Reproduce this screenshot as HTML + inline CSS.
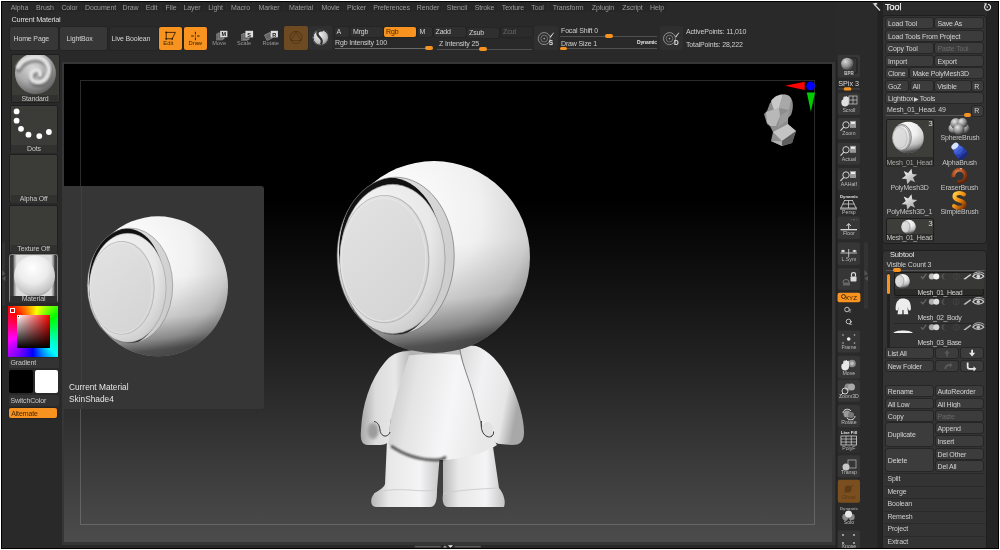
<!DOCTYPE html>
<html><head><meta charset="utf-8">
<style>
*{margin:0;padding:0;box-sizing:border-box}
html,body{width:1000px;height:550px;overflow:hidden;background:#fff}
body{font-family:"Liberation Sans",sans-serif;position:relative}
#frame{position:absolute;left:1px;top:1px;width:998px;height:548px;background:#000}
#ui{position:absolute;will-change:transform;left:2px;top:2px;width:996px;height:546px;background:#292929;overflow:hidden}
.a{position:absolute}
.t{position:absolute;white-space:nowrap;color:#cfcfcf;font-size:7px;line-height:8px;letter-spacing:-0.15px}
.mi{position:absolute;top:0;height:10.3px;background:#262626;border-radius:2px;color:#9c9c9c;font-size:7px;line-height:11px;text-align:center;letter-spacing:-0.1px}
.b{position:absolute;box-shadow:0 0 0 0.8px #232323;background:#3c3c3c;border-radius:2px;color:#d4d4d4;font-size:7px;line-height:10px;height:10px;white-space:nowrap;padding-left:2px;letter-spacing:-0.15px;overflow:hidden}
.o{background:#f7931e;color:#4a2a05}
.dim{color:#6a6a6a}
#canvas{position:absolute;left:59.5px;top:59.8px;width:775px;height:483.6px;background:#363636}
#cin{position:absolute;left:2.5px;top:2.2px;width:768px;height:478.4px;background:linear-gradient(#000 0px,#000 135px,#151515 238px,#282828 322px,#3b3b3b 402px,#4c4c4c 478px)}
#inner{position:absolute;left:16.4px;top:16.4px;width:735px;height:444.5px;border:1.3px solid rgba(255,255,255,0.17)}
</style></head><body>
<div id="frame"></div>
<div id="ui">
<!-- menu (ui offset: -2,-2) -->
<div class="mi" style="left:6px;width:23px">Alpha</div>
<div class="mi" style="left:31px;width:24px">Brush</div>
<div class="mi" style="left:56px;width:23px">Color</div>
<div class="mi" style="left:80px;width:37px">Document</div>
<div class="mi" style="left:118px;width:21px">Draw</div>
<div class="mi" style="left:141px;width:17px">Edit</div>
<div class="mi" style="left:160px;width:18px">File</div>
<div class="mi" style="left:179px;width:22px">Layer</div>
<div class="mi" style="left:203px;width:21px">Light</div>
<div class="mi" style="left:226px;width:25px">Macro</div>
<div class="mi" style="left:253px;width:28px">Marker</div>
<div class="mi" style="left:283px;width:32px">Material</div>
<div class="mi" style="left:316px;width:25px">Movie</div>
<div class="mi" style="left:342px;width:25px">Picker</div>
<div class="mi" style="left:368px;width:43px">Preferences</div>
<div class="mi" style="left:412px;width:28px">Render</div>
<div class="mi" style="left:441px;width:28px">Stencil</div>
<div class="mi" style="left:469px;width:27px">Stroke</div>
<div class="mi" style="left:497px;width:28px">Texture</div>
<div class="mi" style="left:526px;width:19px">Tool</div>
<div class="mi" style="left:547px;width:38px">Transform</div>
<div class="mi" style="left:586px;width:30px">Zplugin</div>
<div class="mi" style="left:616px;width:29px">Zscript</div>
<div class="mi" style="left:645px;width:20px">Help</div>

<div class="t" style="left:9.5px;top:13.5px;color:#dedede;font-size:7.4px;letter-spacing:-0.25px">Current Material</div>

<!-- toolbar -->
<div class="b" style="left:7.5px;top:24.5px;width:48px;height:23px;line-height:23px;padding-left:4px;background:#373737">Home Page</div>
<div class="b" style="left:57.5px;top:24.5px;width:47px;height:23px;line-height:23px;padding-left:7px;background:#373737">LightBox</div>
<div class="b" style="left:107.5px;top:24.5px;width:48px;height:23px;line-height:23px;background:#2c2c2c">Live Boolean</div>
<div class="b o" style="left:157px;top:24.5px;width:23px;height:23.5px"></div>
<div class="b o" style="left:182px;top:24.5px;width:23px;height:23.5px"></div>
<div class="a" style="left:282px;top:24px;width:24px;height:24px;background:#6e4a22;border-radius:2px"></div>
<div class="a" style="left:307px;top:24px;width:23px;height:24px;background:#2f2f2f;border-radius:2px"></div>
<div class="b" style="left:332.5px;top:24.5px;width:14.5px;background:#2f2f2f">A</div>
<div class="b" style="left:348px;top:24.5px;width:33px;background:#2f2f2f;padding-left:3px">Mrgb</div>
<div class="b o" style="left:382px;top:24.5px;width:32px">Rgb</div>
<div class="b" style="left:415.5px;top:24.5px;width:14.5px;background:#2f2f2f">M</div>
<div class="b" style="left:431.5px;top:24.5px;width:32.5px;background:#2f2f2f">Zadd</div>
<div class="b" style="left:465px;top:25.5px;width:32px;background:#2f2f2f">Zsub</div>
<div class="b dim" style="left:499px;top:24.5px;width:32px;background:#2b2b2b">Zcut</div>
<div class="t" style="left:333px;top:37px">Rgb Intensity 100</div>
<div class="a" style="left:333px;top:45.5px;width:98px;height:1px;background:#6a6a6a"></div>
<div class="a" style="left:423px;top:44px;width:7.5px;height:3.5px;background:#f7931e;border-radius:2px"></div>
<div class="t" style="left:437px;top:38px">Z Intensity 25</div>
<div class="a" style="left:435px;top:46.5px;width:95px;height:1px;background:#505050"></div>
<div class="a" style="left:477px;top:45px;width:7.5px;height:3.5px;background:#f7931e;border-radius:2px"></div>
<div class="a" style="left:532px;top:24px;width:23.5px;height:23.5px;background:#2f2f2f;border-radius:2px"></div>
<div class="t" style="left:559px;top:25px">Focal Shift 0</div>
<div class="a" style="left:558px;top:33.5px;width:97px;height:1px;background:#505050"></div>
<div class="a" style="left:603px;top:32px;width:7.5px;height:3.5px;background:#f7931e;border-radius:2px"></div>
<div class="t" style="left:559px;top:37.5px">Draw Size 1</div>
<div class="t" style="left:635px;top:36px;font-size:5px;font-weight:bold;color:#e0e0e0">Dynamic</div>
<div class="a" style="left:558px;top:46px;width:97px;height:1px;background:#505050"></div>
<div class="a" style="left:557.5px;top:44.5px;width:7.5px;height:3.5px;background:#f7931e;border-radius:2px"></div>
<div class="a" style="left:657.5px;top:24px;width:23.5px;height:23.5px;background:#2f2f2f;border-radius:2px"></div>
<div class="t" style="left:684px;top:26px">ActivePoints: 11,010</div>
<div class="t" style="left:684px;top:38.5px">TotalPoints: 28,222</div>


<svg class="a" style="left:-2px;top:-2px" width="1000" height="60" viewBox="0 0 1000 60" font-family="Liberation Sans, sans-serif">
<defs>
<radialGradient id="gMatS" cx="0.4" cy="0.35" r="0.7"><stop offset="0" stop-color="#f4f4f4"/><stop offset="0.7" stop-color="#b8b8b8"/><stop offset="1" stop-color="#606060"/></radialGradient>
<g id="brushIco">
<circle cx="0" cy="0" r="6" fill="none" stroke="#9a9a9a" stroke-width="0.9"/>
<circle cx="0" cy="0" r="3.4" fill="none" stroke="#7a7a7a" stroke-width="0.9"/>
<circle cx="0" cy="0" r="0.8" fill="#aaa"/>
<path d="M5,-1.5 L9,-6 L10.2,-6.5 L9.6,-5 L6.5,-0.5 Z" fill="#e8e8e8" stroke="#111" stroke-width="0.5"/>
</g>
</defs>
<!-- Edit -->
<path d="M166.2,32.4 L175.4,32.4 L172.2,38.8 L166.2,38.8 Z" fill="none" stroke="#1e1405" stroke-width="0.8"/>
<g fill="#1e1405"><circle cx="166.2" cy="32.4" r="0.9"/><circle cx="172.2" cy="38.8" r="0.9"/><circle cx="166.2" cy="38.8" r="0.9"/></g>
<text x="168.3" y="45.3" font-size="5.8" fill="#3a2405" text-anchor="middle">Edit</text>
<!-- Draw -->
<path d="M191.2,36 L193.8,36 M197,36 L199.6,36 M195.4,31.8 L195.4,34.4 M195.4,37.6 L195.4,40.2" stroke="#1e1405" stroke-width="0.9"/>
<circle cx="195.4" cy="36" r="0.6" fill="#1e1405"/>
<text x="195.3" y="45.3" font-size="5.8" fill="#3a2405" text-anchor="middle">Draw</text>
<!-- Move -->
<rect x="216.5" y="34" width="6" height="6" fill="#555" stroke="#888" stroke-width="0.6"/>
<rect x="218" y="33" width="6" height="6" fill="#666" stroke="#999" stroke-width="0.6"/>
<rect x="220.2" y="30.8" width="7.2" height="6.4" fill="#ddd"/>
<text x="223.8" y="36.4" font-size="5.5" fill="#111" text-anchor="middle" font-weight="bold">M</text>
<text x="219.2" y="45" font-size="5.6" fill="#9a9a9a" text-anchor="middle">Move</text>
<!-- Scale -->
<rect x="241.5" y="34.5" width="6" height="6" fill="#555" stroke="#888" stroke-width="0.6"/>
<rect x="243" y="33.5" width="6" height="6" fill="#666" stroke="#999" stroke-width="0.6"/>
<rect x="245.4" y="30.8" width="7.7" height="6.6" fill="#ddd"/>
<text x="249.2" y="36.5" font-size="5.5" fill="#111" text-anchor="middle" font-weight="bold">S</text>
<text x="244" y="45" font-size="5.6" fill="#9a9a9a" text-anchor="middle">Scale</text>
<!-- Rotate -->
<rect x="265.5" y="33.5" width="6" height="6" fill="#666" stroke="#999" stroke-width="0.6" transform="rotate(-25 268.5 36.5)"/>
<rect x="270.7" y="30.8" width="7.2" height="6.6" fill="#ddd"/>
<text x="274.3" y="36.5" font-size="5.5" fill="#111" text-anchor="middle" font-weight="bold">R</text>
<text x="270.7" y="45" font-size="5.6" fill="#9a9a9a" text-anchor="middle">Rotate</text>
<!-- brown circle -->
<circle cx="296" cy="37.4" r="6" fill="none" stroke="#4a3010" stroke-width="0.8"/>
<path d="M296,31.8 L301,40.5 L291,40.5 Z" fill="none" stroke="#4a3010" stroke-width="0.7"/>
<!-- material S -->
<circle cx="320.8" cy="37.6" r="8.2" fill="url(#gMatS)"/>
<circle cx="320.8" cy="37.6" r="7.8" fill="none" stroke="#2a2a2a" stroke-width="1"/>
<path d="M323,30.5 C318,30 316,33 318.5,36 C321,39 323,40 321,44.5" stroke="#333" stroke-width="2.2" fill="none"/>
<use href="#brushIco" transform="translate(544.2,38.6)"/>
<text x="551" y="45.3" font-size="6.5" fill="#e0e0e0" text-anchor="middle" font-weight="bold">S</text>
<use href="#brushIco" transform="translate(669.5,38.6)"/>
<text x="676.3" y="45.3" font-size="6.5" fill="#e0e0e0" text-anchor="middle" font-weight="bold">D</text>
</svg>
<!-- left tray (ui coords = page-2) -->
<div class="a" style="left:9px;top:52.3px;width:49px;height:48.5px;background:#3b3b38;border-radius:2px;border:1px solid #1f1f1f;overflow:hidden">
<svg width="48" height="48" viewBox="0 0 48 48" style="position:absolute;left:-1px;top:-1px">
<defs><radialGradient id="gStd" cx="0.4" cy="0.3" r="0.75"><stop offset="0" stop-color="#d8d8d8"/><stop offset="0.55" stop-color="#ababab"/><stop offset="1" stop-color="#5a5a5a"/></radialGradient><filter id="fStd"><feGaussianBlur stdDeviation="0.9"/></filter></defs>
<circle cx="24.5" cy="19.5" r="20.5" fill="url(#gStd)"/>
<path d="M7,14 C12,4 28,1 35,9 C42,18 35,30 26,29 C18,28 18,19 24,17 C28,16 30,19 29,22" stroke="#5a5a5a" stroke-width="6" fill="none" stroke-linecap="round" opacity="0.55" filter="url(#fStd)" transform="translate(1,1.5)"/>
<path d="M7,13 C12,3 28,0 35,8 C42,17 35,29 26,28 C18,27 18,18 24,16 C28,15 30,18 29,21" stroke="#e4e4e4" stroke-width="4.5" fill="none" stroke-linecap="round" filter="url(#fStd)"/>
</svg></div>
<div class="a" style="left:10px;top:92.6px;width:46px;height:7.5px;background:#313130"></div>
<div class="t" style="left:9px;top:92.6px;width:48px;text-align:center;color:#c8c8c8">Standard</div>
<div class="a" style="left:7.6px;top:102.7px;width:48.6px;height:48.5px;background:#3b3b38;border-radius:2px;border:1px solid #1f1f1f"></div>
<svg class="a" style="left:-2px;top:-2px" width="70" height="160" viewBox="0 0 70 160">
<g fill="#fff"><circle cx="16.6" cy="111.4" r="2.9"/><circle cx="16.6" cy="120.7" r="2.9"/><circle cx="21" cy="128.8" r="2.9"/><circle cx="28.5" cy="134.7" r="2.9"/><circle cx="39.3" cy="136.1" r="2.9"/><circle cx="48.9" cy="132" r="2.9"/></g></svg>
<div class="a" style="left:9px;top:143px;width:46px;height:7.5px;background:#313130"></div>
<div class="t" style="left:8px;top:143px;width:48px;text-align:center;color:#c8c8c8">Dots</div>
<div class="a" style="left:7.2px;top:152.4px;width:48.6px;height:48.5px;background:#3b3b38;border-radius:2px;border:1px solid #1f1f1f"></div>
<div class="a" style="left:8.6px;top:193px;width:46px;height:7.5px;background:#313130"></div>
<div class="t" style="left:7.6px;top:193px;width:48px;text-align:center;color:#c8c8c8">Alpha Off</div>
<div class="a" style="left:7.2px;top:202.6px;width:48.6px;height:48.5px;background:#3b3b38;border-radius:2px;border:1px solid #1f1f1f"></div>
<div class="a" style="left:8.6px;top:243px;width:46px;height:7.5px;background:#313130"></div>
<div class="t" style="left:7.6px;top:243px;width:48px;text-align:center;color:#c8c8c8">Texture Off</div>
<div class="a" style="left:7px;top:252.4px;width:49.2px;height:48.7px;background:#3a3a3a;border-radius:2.5px;border:1px solid #8a8a8a;overflow:hidden">
<svg width="48" height="47" viewBox="0 0 48 47" style="position:absolute;left:0;top:0">
<defs><linearGradient id="gMatBg" x1="0" y1="0" x2="1" y2="0"><stop offset="0" stop-color="#7a7a7a"/><stop offset="0.08" stop-color="#dcdcdc"/><stop offset="0.92" stop-color="#dcdcdc"/><stop offset="1" stop-color="#6a6a6a"/></linearGradient>
<radialGradient id="gMat" cx="0.45" cy="0.3" r="0.75"><stop offset="0" stop-color="#ffffff"/><stop offset="0.5" stop-color="#ececec"/><stop offset="0.85" stop-color="#c4c4c4"/><stop offset="1" stop-color="#8a8a8a"/></radialGradient></defs>
<rect x="3.5" y="0" width="41" height="41" fill="url(#gMatBg)"/>
<circle cx="24.5" cy="21" r="20.5" fill="url(#gMat)"/>
</svg></div>
<div class="a" style="left:8px;top:294px;width:47px;height:6.5px;background:#2f2f2f"></div>
<div class="t" style="left:7px;top:293px;width:49px;text-align:center;color:#c8c8c8">Material</div>
<!-- color picker -->
<div class="a" style="left:6.3px;top:304px;width:50px;height:50.7px;background:conic-gradient(from -45deg at 50% 50%,#f00 0deg,#ff0 55deg,#0f0 100deg,#0ff 180deg,#00f 225deg,#f0f 295deg,#f00 360deg)"></div>
<div class="a" style="left:15px;top:312.8px;width:33.2px;height:33.2px;background:linear-gradient(to top,#000,rgba(0,0,0,0)),linear-gradient(to right,#fff,#f00)"></div>
<div class="a" style="left:7.6px;top:306.3px;width:5.7px;height:5.2px;border:1px solid #fff;background:#e00"></div>
<div class="a" style="left:15px;top:312.8px;width:3px;height:3px;border:1px solid #fff;background:#222"></div>
<div class="a" style="left:6.5px;top:355.8px;width:50px;height:9.8px;background:#333"></div>
<div class="t" style="left:8.5px;top:357px;color:#c8c8c8">Gradient</div>
<div class="a" style="left:6.7px;top:367.8px;width:24px;height:23px;background:#000;border-radius:2px"></div>
<div class="a" style="left:32.5px;top:367.8px;width:23.3px;height:23px;background:#fff;border-radius:2px"></div>
<div class="a" style="left:6.5px;top:392.9px;width:50px;height:10.9px;background:#333;border-radius:2px"></div>
<div class="t" style="left:8.5px;top:394.5px;color:#c8c8c8">SwitchColor</div>
<div class="b o" style="left:7.2px;top:406.3px;width:48px;height:10px;line-height:11px;color:#4a2805">Alternate</div>
<div class="a" style="left:0px;top:239.5px;width:3px;height:64px;background:#333;border-radius:1px"></div><svg class="a" style="left:-2px;top:-2px" width="10" height="300"><path d="M2,270 L5.5,274 L2,275.5 Z" fill="#555"/><path d="M5.5,276 L2,278.5 L5.5,281 Z" fill="#555"/></svg>



<div id="canvas"><div id="cin"><div id="inner"></div></div></div>
<svg class="a" style="left:-2px;top:-2px" width="1000" height="550" viewBox="0 0 1000 550">
<rect x="414.5" y="545.8" width="26.5" height="1.6" rx="0.8" fill="#5a5a5a"/>
<rect x="454.5" y="545.8" width="26.5" height="1.6" rx="0.8" fill="#5a5a5a"/>
<path d="M443,547.6 L445,545.4 L447,547.6 Z" fill="#aaa"/>
<path d="M448,545.3 L453,545.3 L450.5,547.8 Z" fill="#eee"/>
</svg>
<!-- character -->
<svg class="a" style="left:-2px;top:-2px" width="1000" height="550" viewBox="0 0 1000 550">
<defs>
<radialGradient id="gHead" cx="0.32" cy="0.26" r="0.85"><stop offset="0" stop-color="#ffffff"/><stop offset="0.5" stop-color="#f0f0f0"/><stop offset="0.8" stop-color="#d2d2d2"/><stop offset="1" stop-color="#9a9a9a"/></radialGradient>
<linearGradient id="gHeadShade" x1="0" y1="0" x2="0.12" y2="1"><stop offset="0.5" stop-color="#000" stop-opacity="0"/><stop offset="0.78" stop-color="#000" stop-opacity="0.12"/><stop offset="0.92" stop-color="#000" stop-opacity="0.35"/><stop offset="1" stop-color="#000" stop-opacity="0.6"/></linearGradient>
<radialGradient id="gRing" cx="0.35" cy="0.3" r="0.85"><stop offset="0" stop-color="#f6f6f6"/><stop offset="0.6" stop-color="#e8e8e8"/><stop offset="0.85" stop-color="#cfcfcf"/><stop offset="1" stop-color="#a0a0a0"/></radialGradient><linearGradient id="gWall" x1="0" y1="0" x2="1" y2="1"><stop offset="0" stop-color="#e4e4e4"/><stop offset="1" stop-color="#c8c8c8"/></linearGradient>
<linearGradient id="gDisc" x1="0.2" y1="0" x2="0.8" y2="1"><stop offset="0" stop-color="#e2e2e2"/><stop offset="1" stop-color="#d4d4d4"/></linearGradient>
<linearGradient id="gBody" x1="0" y1="0" x2="1" y2="0">
<stop offset="0" stop-color="#c8c8c8"/><stop offset="0.2" stop-color="#f2f2f2"/><stop offset="0.7" stop-color="#f6f6f8"/><stop offset="1" stop-color="#bdbdbd"/></linearGradient>
<linearGradient id="gArm" x1="0" y1="0" x2="1" y2="0">
<stop offset="0" stop-color="#bdbdbd"/><stop offset="0.35" stop-color="#f4f4f4"/><stop offset="0.75" stop-color="#f0f0f2"/><stop offset="1" stop-color="#b0b0b0"/></linearGradient>

<linearGradient id="gLeg" x1="0" y1="0" x2="1" y2="0"><stop offset="0" stop-color="#b8b8b8"/><stop offset="0.25" stop-color="#e8e8e8"/><stop offset="0.7" stop-color="#f4f4f6"/><stop offset="1" stop-color="#c4c4c4"/></linearGradient>
<linearGradient id="gTorso" x1="0" y1="0" x2="1" y2="0.2"><stop offset="0" stop-color="#c0c0c0"/><stop offset="0.3" stop-color="#e4e4e4"/><stop offset="0.65" stop-color="#f6f6f8"/><stop offset="1" stop-color="#e8e8e8"/></linearGradient>
<linearGradient id="gArmL" x1="0" y1="0" x2="1" y2="0"><stop offset="0" stop-color="#a8a8a8"/><stop offset="0.3" stop-color="#dcdcdc"/><stop offset="0.7" stop-color="#e8e8e8"/><stop offset="1" stop-color="#b8b8b8"/></linearGradient>
<linearGradient id="gArmR" x1="0" y1="0" x2="1" y2="0.3"><stop offset="0" stop-color="#d8d8d8"/><stop offset="0.4" stop-color="#f2f2f4"/><stop offset="0.8" stop-color="#e6e6e6"/><stop offset="1" stop-color="#a8a8a8"/></linearGradient>
<filter id="fBlur" x="-50%" y="-50%" width="200%" height="200%"><feGaussianBlur stdDeviation="1"/></filter><filter id="fBlur2" x="-50%" y="-50%" width="200%" height="200%"><feGaussianBlur stdDeviation="1.8"/></filter>
<clipPath id="cpOpen"><ellipse cx="-38" cy="-1" rx="58" ry="78"/></clipPath>
<g id="headS">
<circle cx="0" cy="0" r="95" fill="url(#gHead)"/><circle cx="0" cy="0" r="95" fill="url(#gHeadShade)"/>
<ellipse cx="-38" cy="-1" rx="58" ry="78" fill="url(#gWall)" stroke="#555" stroke-width="4"/>
<ellipse cx="-41" cy="2" rx="52" ry="74" fill="url(#gRing)" stroke="#777" stroke-width="3"/>
<ellipse cx="-49.3" cy="2" rx="43.6" ry="62.6" fill="url(#gDisc)" stroke="#aaa" stroke-width="3"/>
</g>
<g id="headG">
<circle cx="0" cy="0" r="95" fill="url(#gHead)"/><circle cx="0" cy="0" r="95" fill="url(#gHeadShade)"/>
<ellipse cx="-38" cy="-1" rx="58" ry="78" fill="url(#gWall)"/>
<g clip-path="url(#cpOpen)">
<ellipse cx="-43" cy="-4.5" rx="51" ry="74" fill="#111"/>
<ellipse cx="-42" cy="5" rx="49" ry="74" fill="#222"/>
</g>
<ellipse cx="-38" cy="-1" rx="58" ry="78" fill="none" stroke="#666" stroke-width="0.6"/>
<ellipse cx="-41" cy="2" rx="52" ry="74" fill="url(#gRing)" stroke="#8a8a8a" stroke-width="0.6"/>
<ellipse cx="-49" cy="2" rx="44.5" ry="63.5" fill="#b4b4b4"/>
<ellipse cx="-49.3" cy="2" rx="43.6" ry="62.6" fill="url(#gDisc)"/>
<ellipse cx="-50" cy="2.5" rx="42" ry="61" fill="none" stroke="#efefef" stroke-width="0.8" opacity="0.7"/>
</g>
</defs>
<!-- legs -->
<path d="M387,440 L441,440 L437,490 C437,500 436,507 430,507 L376,507 C370,507 370,498 374,494 C380,489 384,488 385,484 Z" fill="url(#gLeg)"/>
<path d="M443,440 L492,440 L499,488 C504,494 506,502 504,507 L448,507 C443,507 442,500 443,494 Z" fill="url(#gLeg)"/>
<path d="M374,494 C380,490 395,489 410,490 C420,491 430,491 437,490" stroke="#cfcfcf" stroke-width="1" fill="none"/>
<path d="M443,494 C455,490 480,489 499,488" stroke="#cfcfcf" stroke-width="1" fill="none"/>
<!-- torso -->
<path d="M400,352 C420,349 450,348 462,350 L472,385 L482,420 L497,445 C485,453 462,460 440,460 C418,460 398,452 388,444 L392,405 L398,370 Z" fill="url(#gTorso)"/>
<path d="M391,446 C404,455 420,460 436,460 C440,460 443,459 446,457" stroke="#1a1a1a" stroke-width="2.6" fill="none" opacity="0.8" filter="url(#fBlur)"/>
<path d="M402,351 C425,348 450,347 462,350 L462,355 C440,353 420,354 402,356 Z" fill="#9a9a9a" opacity="0.6"/>
<!-- arms -->
<path d="M400.5,352 L410,352 C404,372 396,395 391,418 C389,428 390,435 389,440 C388,444 384,445 378,445 L368,445 C362,445 360,440 361,430 C362,405 370,380 385,362 C390,356 395,353 400.5,352 Z" fill="url(#gArmL)"/>
<ellipse cx="373" cy="431" rx="5.5" ry="8" fill="#9c9c9c" filter="url(#fBlur2)"/><path d="M374,421.5 C378,422 379.5,426 380,430 C380.5,434 383,436.5 386,436 C388,435.5 389.5,434 390,432" stroke="#222" stroke-width="0.9" fill="none"/>
<path d="M460,350 C462,345 470,345 476,346 C488,350 500,362 508,378 C518,398 524,418 524,432 C524,442 520,445 512,445 L500,444 C494,443 491,440 492,436 C488,431 485,428 482,427 C478,410 472,388 466,372 C462,362 459,355 460,350 Z" fill="url(#gArmR)"/>
<path d="M460,350 C462,362 466,372 472,390 C477,408 480,420 482,427" stroke="#555" stroke-width="0.7" fill="none"/>
<ellipse cx="487.5" cy="429" rx="5.5" ry="7" fill="#e2e2e2"/><path d="M481.5,421 C480.5,428 482,434 487,436.5 C491,438 494,435.5 493.5,431.5" stroke="#222" stroke-width="0.9" fill="none"/>
<use href="#headG" transform="translate(434,257) scale(1.01)"/>
</svg>
<div class="a" style="left:61px;top:184px;width:200.5px;height:223px;background:#363636;border-radius:0 3px 3px 0"></div>
<div class="a" style="left:78.5px;top:184px;width:1px;height:223px;background:#3f3f3f"></div>
<svg class="a" style="left:-2px;top:-2px" width="1000" height="550" viewBox="0 0 1000 550"><use href="#headG" transform="translate(158,286.3) scale(0.737)"/></svg>
<div class="t" style="left:67px;top:380px;color:#e6e6e6;font-size:8.3px;line-height:10px;letter-spacing:0">Current Material</div>
<div class="t" style="left:67px;top:391.6px;color:#e6e6e6;font-size:8.3px;line-height:10px;letter-spacing:0">SkinShade4</div>
<svg class="a" style="left:-2px;top:-2px" width="1000" height="160" viewBox="0 0 1000 160">
<path d="M785,85.8 L804.7,81.8 L804.7,90 Z" fill="#f00"/>
<circle cx="810.6" cy="85.9" r="4.3" fill="#00f"/>
<path d="M806.8,92.4 L815,92.4 L810.9,111.8 Z" fill="#0c0"/>
<g transform="translate(0,0)">
<path d="M774,100 C778,94 788,93 791,98 C794,103 793,110 791,115 L788,118 L788,125 L796,131 L792,143 L782,146 L771,141 L773,132 L770,126 L767,124 L764,114 L767,111 L770,103 Z" fill="#8e8e8e"/>
<path d="M771,101 C774,96 780,94 783,94.5 L779,108 L774,110 Z" fill="#c8c8c8"/>
<path d="M779,108 L783,94.5 C788,94 791,97 791,100 L789,110 Z" fill="#a8a8a8"/>
<path d="M766,112 L779,108 L780,116 L776,126 L770,126 L767,122 Z" fill="#b8b8b8"/>
<path d="M780,116 L789,110 L788,120 L778,127 Z" fill="#9c9c9c"/>
<path d="M773,132 L788,124 L796,131 L782,141 Z" fill="#c4c4c4"/>
<path d="M771,141 L782,141 L782,146 Z" fill="#b0b0b0"/>
<path d="M782,141 L796,131 L792,143 L782,146 Z" fill="#5e5e5e"/>
</g>
</svg>
<!-- right panel -->
<div class="a" style="left:878.0px;top:0.0px;width:118.0px;height:546.0px;background:#2b2b2b"></div>
<div class="a" style="left:878.0px;top:0.0px;width:2.5px;height:546.0px;background:#222"></div>
<div class="a" style="left:984.5px;top:0.0px;width:11.5px;height:546.0px;background:#242424"></div>
<div class="t" style="left:883.0px;top:0.5px;font-size:9px;color:#f0f0f0;letter-spacing:0;font-weight:normal;-webkit-text-stroke:0.25px #f0f0f0">Tool</div>
<div class="a" style="left:880.0px;top:12.5px;width:104.5px;height:229.5px;background:#333;border:1px solid #1e1e1e;border-radius:4px"></div>
<div class="b " style="left:884.0px;top:16.0px;width:47.2px;height:10.0px;line-height:11.2px;padding-left:2px;">Load Tool</div>
<div class="b " style="left:933.4px;top:16.0px;width:48.0px;height:10.0px;line-height:11.2px;padding-left:2px;">Save As</div>
<div class="b " style="left:884.0px;top:28.5px;width:97.4px;height:10.0px;line-height:11.2px;padding-left:2px;">Load Tools From Project</div>
<div class="b " style="left:884.0px;top:41.0px;width:47.2px;height:10.0px;line-height:11.2px;padding-left:2px;">Copy Tool</div>
<div class="b dim" style="left:933.4px;top:41.0px;width:48.0px;height:10.0px;line-height:11.2px;padding-left:2px;">Paste Tool</div>
<div class="b " style="left:884.0px;top:53.5px;width:47.2px;height:10.0px;line-height:11.2px;padding-left:2px;">Import</div>
<div class="b " style="left:933.4px;top:53.5px;width:48.0px;height:10.0px;line-height:11.2px;padding-left:2px;">Export</div>
<div class="b " style="left:884.0px;top:66.0px;width:22.3px;height:10.0px;line-height:11.2px;padding-left:2px;">Clone</div>
<div class="b " style="left:908.4px;top:66.0px;width:73.0px;height:10.0px;line-height:11.2px;padding-left:2px;">Make PolyMesh3D</div>
<div class="b " style="left:884.0px;top:78.5px;width:22.3px;height:10.0px;line-height:11.2px;padding-left:2px;">GoZ</div>
<div class="b " style="left:908.6px;top:78.5px;width:22.2px;height:10.0px;line-height:11.2px;padding-left:2px;">All</div>
<div class="b " style="left:933.2px;top:78.5px;width:35.4px;height:10.0px;line-height:11.2px;padding-left:2px;">Visible</div>
<div class="b " style="left:970.3px;top:78.5px;width:11.1px;height:10.0px;line-height:11.2px;padding-left:2px;">R</div>
<div class="b " style="left:884.0px;top:91.0px;width:97.4px;height:10.0px;line-height:11.2px;padding-left:2px;">Lightbox<span style="font-size:6px;margin:0 0.5px 0 1px">&#9654;</span>Tools</div>
<div class="t" style="left:885.0px;top:104.0px;">Mesh_01_Head. 49</div>
<div class="a" style="left:884.0px;top:112.6px;width:84.0px;height:1.0px;background:#555"></div>
<div class="a" style="left:962.0px;top:111.3px;width:7.0px;height:3.5px;background:#f7931e;border-radius:2px"></div>
<div class="b " style="left:970.3px;top:104.4px;width:11.1px;height:9.6px;line-height:10.8px;padding-left:2px;">R</div>
<div class="a" style="left:884.0px;top:215.9px;width:47.7px;height:24.0px;background:#3d3d3a;border:1px solid #1e1e1e;border-radius:2px"></div>
<div class="a" style="left:884.0px;top:116.6px;width:47.7px;height:48.6px;background:#3d3d3a;border:1px solid #1e1e1e;border-radius:2px"></div>
<div class="a" style="left:885px;top:155.4px;width:45.7px;height:9.6px;background:#2c2c2a"></div>
<div class="a" style="left:885px;top:232px;width:45.7px;height:7.9px;background:#2c2c2a"></div>
<div class="t" style="left:926.2px;top:118.0px;font-size:8px;color:#ddd">3</div>
<div class="t" style="left:877.5px;top:156.8px;width:60px;text-align:center;color:#a8a8a8;letter-spacing:-0.3px">Mesh_01_Head</div>
<div class="t" style="left:928.0px;top:131.7px;width:60px;text-align:center;color:#c4c4c4">SphereBrush</div>
<div class="t" style="left:927.5px;top:156.8px;width:60px;text-align:center;color:#c4c4c4">AlphaBrush</div>
<div class="t" style="left:877.5px;top:181.9px;width:60px;text-align:center;color:#c4c4c4">PolyMesh3D</div>
<div class="t" style="left:927.5px;top:181.9px;width:60px;text-align:center;color:#c4c4c4">EraserBrush</div>
<div class="t" style="left:877.5px;top:206.4px;width:60px;text-align:center;color:#c4c4c4">PolyMesh3D_1</div>
<div class="t" style="left:927.5px;top:206.4px;width:60px;text-align:center;color:#c4c4c4">SimpleBrush</div>
<div class="t" style="left:877.5px;top:231.8px;width:60px;text-align:center;color:#c4c4c4;letter-spacing:-0.3px">Mesh_01_Head</div>
<div class="t" style="left:926.2px;top:218.0px;font-size:8px;color:#ddd">3</div>
<div class="a" style="left:880.0px;top:247.8px;width:104.5px;height:310px;background:#333;border:1px solid #1e1e1e;border-radius:4px"></div>
<div class="t" style="left:888.0px;top:248.5px;font-size:7.5px;color:#e6e6e6">Subtool</div>
<div class="t" style="left:884.6px;top:258.5px;">Visible Count 3</div>
<div class="a" style="left:884.0px;top:267.5px;width:99.0px;height:1.0px;background:#555"></div>
<div class="a" style="left:891.0px;top:266.2px;width:7.8px;height:3.6px;background:#f7931e;border-radius:2px"></div>
<div class="a" style="left:884.9px;top:271px;width:2.9px;height:75px;background:#222"></div>
<div class="a" style="left:885.0px;top:271.6px;width:3.0px;height:20.6px;background:#f7931e;border-radius:1.5px"></div>
<div class="a" style="left:892.2px;top:270.4px;width:90.3px;height:24.0px;background:#2a2a28;border:1px solid #1a1a1a;border-radius:2px"></div>
<div class="a" style="left:893.0px;top:271.0px;width:89.0px;height:16.0px;background:#383836"></div>
<div class="t" style="left:915.5px;top:286.8px;color:#d0d0d0;letter-spacing:-0.4px">Mesh_01_Head</div>
<div class="t" style="left:915.5px;top:311.6px;color:#d0d0d0;letter-spacing:-0.4px">Mesh_02_Body</div>
<div class="t" style="left:915.5px;top:337.0px;color:#d0d0d0;letter-spacing:-0.4px">Mesh_03_Base</div>
<div class="a" style="left:892px;top:295px;width:90px;height:1px;background:#262626"></div>
<div class="a" style="left:892px;top:320.5px;width:90px;height:1px;background:#262626"></div>
<svg class="a" style="left:-2px;top:-2px" width="1000" height="550" viewBox="0 0 1000 550">
<defs>
<g id="stIcons">
<path d="M-2.5,0 L-0.5,2 L3,-2.5" stroke="#6a6a6a" stroke-width="1.3" fill="none"/>
<circle cx="8.5" cy="0" r="3" fill="#bdbdbd"/><circle cx="13" cy="0" r="3" fill="#f2f2f2"/>
<path d="M22.5,-3 A3.2,3.2 0 1 0 22.5,3 A2.4,3 0 0 1 22.5,-3 Z" fill="#555"/>
<circle cx="33" cy="0" r="3" fill="none" stroke="#444" stroke-width="1"/><line x1="33" y1="-2.5" x2="33" y2="2.5" stroke="#444" stroke-width="1"/>
<path d="M40,2.5 L47,-2.5 L48,-1.5 L42,3 Z" fill="#d0d0d0"/>
<path d="M49.5,0 C52,-3.5 58,-3.5 60.5,0 C58,3 52,3 49.5,0 Z" fill="none" stroke="#d8d8d8" stroke-width="1.2"/><circle cx="55" cy="0" r="1.8" fill="#d8d8d8"/><path d="M50,-2.5 C53,-5 58,-5 61,-2.5" stroke="#d8d8d8" stroke-width="0.9" fill="none"/>
</g>
</defs>
<use href="#stIcons" transform="translate(923.3,276.4)"/>
<use href="#stIcons" transform="translate(923.3,301.8)" opacity="0.9"/>
<use href="#stIcons" transform="translate(923.3,327.2)" opacity="0.85"/>
<use href="#headS" transform="translate(902.6,281.1) scale(0.076)"/>
<g fill="#ececec">
<path d="M899,300 C896.5,301 895.5,305 895.6,309 C895.7,310.5 897,311 898,310 L899.5,303 Z"/>
<path d="M907,299.5 C909.5,300 911,304 910.9,309 C910.8,310.5 909.5,311 908.5,310 L906.5,303 Z"/>
<path d="M899,299.5 C901,298.3 905,298.3 907,299.5 L908,306 C908,309 906,310 903,310 C900,310 898,309 898,306 Z"/>
<path d="M898.5,308 L902.5,309 L902.3,314.2 L897.5,314.2 Z"/>
<path d="M903.5,309 L907.5,308 L908.3,314.2 L903.7,314.2 Z"/>
</g>
<path d="M893.5,333 C896,329.8 910,329.8 912.8,333 Z" fill="#f0f0f0"/>
</svg>
<div class="b " style="left:883.7px;top:346.2px;width:47.3px;height:10.2px;line-height:11.4px;padding-left:2px;">List All</div>
<div class="b " style="left:933.6px;top:346.2px;width:22.9px;height:10.2px;line-height:11.4px;padding-left:2px;"></div>
<div class="b " style="left:959.0px;top:346.2px;width:22.2px;height:10.2px;line-height:11.4px;padding-left:2px;"></div>
<div class="b " style="left:883.7px;top:359.0px;width:47.3px;height:10.0px;line-height:11.2px;padding-left:2px;">New Folder</div>
<div class="b " style="left:933.6px;top:359.0px;width:22.9px;height:10.0px;line-height:11.2px;padding-left:2px;"></div>
<div class="b " style="left:959.0px;top:359.0px;width:22.2px;height:10.0px;line-height:11.2px;padding-left:2px;"></div>
<svg class="a" style="left:-2px;top:-2px" width="1000" height="550" viewBox="0 0 1000 550">
<path d="M947,350 L944.3,353.5 L946.2,353.5 L946.2,356.5 L947.8,356.5 L947.8,353.5 L949.7,353.5 Z" fill="#5a5a5a"/>
<path d="M972.1,356.5 L969,352.8 L971.2,352.8 L971.2,349.8 L973,349.8 L973,352.8 L975.2,352.8 Z" fill="#e8e8e8"/>
<path d="M944.5,369 C944.5,365.5 946.5,364 950,364 L950,362.3 L952.5,365 L950,367.7 L950,366 C947.5,366 946.3,367 946.3,369 Z" fill="#5a5a5a"/>
<path d="M968.5,362.5 L968.5,366.5 C968.5,367.5 969.2,368 970.2,368 L973.5,368 L973.5,366.2 L976.3,368.8 L973.5,371.4 L973.5,369.7 L969.5,369.7 C967.7,369.7 966.8,368.6 966.8,367 L966.8,362.5 Z" fill="#e8e8e8"/>
</svg>
<div class="b " style="left:883.8px;top:383.7px;width:47.4px;height:10.5px;line-height:11.7px;padding-left:2px;">Rename</div>
<div class="b " style="left:933.5px;top:383.7px;width:47.5px;height:10.5px;line-height:11.7px;padding-left:2px;">AutoReorder</div>
<div class="b " style="left:883.8px;top:396.5px;width:47.4px;height:9.8px;line-height:11.0px;padding-left:2px;">All Low</div>
<div class="b " style="left:933.5px;top:396.5px;width:47.5px;height:9.8px;line-height:11.0px;padding-left:2px;">All High</div>
<div class="b " style="left:883.8px;top:408.9px;width:47.4px;height:10.5px;line-height:11.7px;padding-left:2px;">Copy</div>
<div class="b dim" style="left:933.5px;top:408.9px;width:47.5px;height:10.5px;line-height:11.7px;padding-left:2px;">Paste</div>
<div class="b " style="left:883.8px;top:421.3px;width:47.4px;height:22.9px;line-height:24.1px;padding-left:2px;">Duplicate</div>
<div class="b " style="left:933.5px;top:421.3px;width:47.5px;height:10.2px;line-height:11.4px;padding-left:2px;">Append</div>
<div class="b " style="left:933.5px;top:433.8px;width:47.5px;height:10.2px;line-height:11.4px;padding-left:2px;">Insert</div>
<div class="b " style="left:883.8px;top:446.5px;width:47.4px;height:22.9px;line-height:24.1px;padding-left:2px;">Delete</div>
<div class="b " style="left:933.5px;top:446.5px;width:47.5px;height:10.0px;line-height:11.2px;padding-left:2px;">Del Other</div>
<div class="b " style="left:933.5px;top:459.0px;width:47.5px;height:10.4px;line-height:11.6px;padding-left:2px;">Del All</div>
<div class="a" style="left:882.0px;top:471.0px;width:101.0px;height:1.0px;background:#2a2a2a"></div>
<div class="t" style="left:885.4px;top:473.0px;">Split</div>
<div class="a" style="left:882.0px;top:483.5px;width:101.0px;height:1.0px;background:#2a2a2a"></div>
<div class="t" style="left:885.4px;top:485.5px;">Merge</div>
<div class="a" style="left:882.0px;top:496.0px;width:101.0px;height:1.0px;background:#2a2a2a"></div>
<div class="t" style="left:885.4px;top:498.0px;">Boolean</div>
<div class="a" style="left:882.0px;top:508.5px;width:101.0px;height:1.0px;background:#2a2a2a"></div>
<div class="t" style="left:885.4px;top:510.5px;">Remesh</div>
<div class="a" style="left:882.0px;top:521.0px;width:101.0px;height:1.0px;background:#2a2a2a"></div>
<div class="t" style="left:885.4px;top:523.0px;">Project</div>
<div class="a" style="left:882.0px;top:533.5px;width:101.0px;height:1.0px;background:#2a2a2a"></div>
<div class="t" style="left:885.4px;top:535.5px;">Extract</div>
<svg class="a" style="left:-2px;top:-2px" width="1000" height="550" viewBox="0 0 1000 550">
<defs>
<radialGradient id="gSph" cx="0.35" cy="0.3" r="0.7"><stop offset="0" stop-color="#e8e8e8"/><stop offset="0.6" stop-color="#8c8c8c"/><stop offset="1" stop-color="#3c3c3c"/></radialGradient>
<linearGradient id="gBlue" x1="0" y1="0" x2="1" y2="1"><stop offset="0" stop-color="#e0e8ff"/><stop offset="0.35" stop-color="#5070e0"/><stop offset="1" stop-color="#101c70"/></linearGradient>
<linearGradient id="gStar" x1="0" y1="0" x2="1" y2="1"><stop offset="0" stop-color="#ffffff"/><stop offset="1" stop-color="#9a9a9a"/></linearGradient>
<linearGradient id="gGold" x1="0" y1="0" x2="1" y2="1"><stop offset="0" stop-color="#ffd040"/><stop offset="0.5" stop-color="#f08a10"/><stop offset="1" stop-color="#803000"/></linearGradient>
<radialGradient id="gCopper" cx="0.4" cy="0.3" r="0.8"><stop offset="0" stop-color="#f0a070"/><stop offset="0.5" stop-color="#b05020"/><stop offset="1" stop-color="#5a2008"/></radialGradient>
</defs>
<use href="#headS" transform="translate(908.1,137.5) scale(0.165)"/>
<use href="#headS" transform="translate(908.7,226.8) scale(0.075)"/>
<g>
<circle cx="953.5" cy="128.5" r="5" fill="url(#gSph)"/><circle cx="964.5" cy="128.5" r="5" fill="url(#gSph)"/><circle cx="956" cy="123.5" r="5.5" fill="url(#gSph)"/><circle cx="962.5" cy="123" r="5" fill="url(#gSph)"/><circle cx="959" cy="129.5" r="5.5" fill="url(#gSph)"/>
</g>
<g transform="translate(959.5,151.5) rotate(-40) scale(0.82,0.9)">
<ellipse cx="0" cy="5" rx="7" ry="4.5" fill="#1a2a80"/>
<rect x="-7" y="-2" width="14" height="7" fill="#2a40a8"/>
<ellipse cx="0" cy="-2" rx="6.5" ry="4" fill="#3a58d0"/>
<rect x="-5" y="-8" width="10" height="6" fill="#4a68d8"/>
<ellipse cx="0" cy="-8" rx="4.8" ry="3" fill="#d8e4ff"/>
</g>
<path id="star6" d="M0,-8 L2.2,-3.2 L7,-4 L3.8,0 L7,4 L2.2,3.2 L0,8 L-2.2,3.2 L-7,4 L-3.8,0 L-7,-4 L-2.2,-3.2 Z" fill="url(#gStar)" transform="translate(909.4,176.6) rotate(15)"/>
<path d="M0,-8 L2.2,-3.2 L7,-4 L3.8,0 L7,4 L2.2,3.2 L0,8 L-2.2,3.2 L-7,4 L-3.8,0 L-7,-4 L-2.2,-3.2 Z" fill="url(#gStar)" transform="translate(909.4,202.1) rotate(15)"/>
<path d="M953.3,177.1 A6.3,6.3 0 1 1 957.35,181.9" stroke="url(#gCopper)" stroke-width="3.8" fill="none"/><circle cx="961" cy="168.8" r="0.8" fill="#ffd8c0"/>
<path d="M964,194.5 C960,192 954,193 954.5,197 C955,201 964,200 964.5,204 C965,208 957,209 954,206" stroke="url(#gGold)" stroke-width="4" fill="none" stroke-linecap="round"/>
</svg>
<!-- right shelf -->
<svg class="a" style="left:-2px;top:-2px" width="1000" height="550" viewBox="0 0 1000 550" font-family="Liberation Sans, sans-serif">
<rect x="835.5" y="2" width="44.5" height="546" fill="#2a2a2a"/><rect x="835.6" y="60" width="2" height="488" fill="#242424"/>
<rect x="877.5" y="2" width="2.5" height="546" fill="#222"/>
<rect x="864" y="242.3" width="4.1" height="66.4" rx="1" fill="#333"/>
<path d="M864.5,270 L868,274 L864.5,275.5 Z" fill="#555"/><path d="M868,276 L864.5,278.5 L868,281 Z" fill="#555"/>
<rect x="837.8" y="54.8" width="22.2" height="22.6" rx="2" fill="#363636"/>
<defs><radialGradient id="gBpr" cx="0.35" cy="0.3" r="0.75"><stop offset="0" stop-color="#d8d8d8"/><stop offset="0.6" stop-color="#8a8a8a"/><stop offset="1" stop-color="#3a3a3a"/></radialGradient></defs>
<rect x="846" y="58" width="11" height="15" rx="2" fill="none" stroke="#222" stroke-width="1.2"/><circle cx="847.3" cy="64" r="6.2" fill="url(#gBpr)"/>
<text x="848.9" y="74.5" font-size="4.5" fill="#d0d0d0" text-anchor="middle" font-weight="bold">BPR</text>
<text x="848.6" y="86.3" font-size="7.2" fill="#dadada" text-anchor="middle">SPix 3</text>
<rect x="838" y="88.4" width="22" height="1" fill="#4a4a4a"/><rect x="843.7" y="87.2" width="7.7" height="3.4" rx="1.7" fill="#f7931e"/>
<rect x="837.8" y="92.7" width="22.2" height="22.3" rx="2" fill="#363636"/>
<path d="M841.5,104 C841,101 842,99 843,100 L843.5,97 C844,96 845,96.5 845,97.5 L845.3,96.5 C846,95.5 847,96 847,97 L847.5,97 C848,96.5 849,97 849,98 L849,103 C849,105 847,106.5 845,106.5 C843,106.5 842,105.5 841.5,104 Z" fill="#e0e0e0"/>
<rect x="849" y="96" width="8" height="8" fill="none" stroke="#bbb" stroke-width="0.8"/><line x1="853" y1="96" x2="853" y2="104" stroke="#bbb" stroke-width="0.8"/><line x1="849" y1="100" x2="857" y2="100" stroke="#bbb" stroke-width="0.8"/>
<text x="848.9" y="111.5" font-size="5.2" fill="#bdbdbd" text-anchor="middle" font-weight="normal">Scroll</text>
<rect x="837.8" y="117.9" width="22.2" height="21.3" rx="2" fill="#363636"/>
<circle cx="846" cy="124.9" r="3.2" fill="none" stroke="#d0d0d0" stroke-width="1"/><line x1="843.8" y1="127.2" x2="840.5" y2="130.70000000000002" stroke="#d0d0d0" stroke-width="1.2"/>
<rect x="850" y="120.9" width="6" height="7" fill="#9a9a9a"/><rect x="851" y="121.9" width="4" height="2" fill="#eee"/>
<text x="848.9" y="135.2" font-size="5.2" fill="#bdbdbd" text-anchor="middle" font-weight="normal">Zoom</text>
<rect x="837.8" y="142.8" width="22.2" height="22.0" rx="2" fill="#363636"/>
<circle cx="846" cy="149.8" r="3.2" fill="none" stroke="#d0d0d0" stroke-width="1"/><line x1="843.8" y1="152.10000000000002" x2="840.5" y2="155.60000000000002" stroke="#d0d0d0" stroke-width="1.2"/>
<rect x="850" y="145.8" width="6" height="7" fill="#9a9a9a"/><rect x="851" y="146.8" width="4" height="2" fill="#eee"/>
<text x="848.9" y="160.8" font-size="5.2" fill="#bdbdbd" text-anchor="middle" font-weight="normal">Actual</text>
<rect x="837.8" y="168" width="22.2" height="22.3" rx="2" fill="#363636"/>
<circle cx="846" cy="175" r="3.2" fill="none" stroke="#d0d0d0" stroke-width="1"/><line x1="843.8" y1="177.3" x2="840.5" y2="180.8" stroke="#d0d0d0" stroke-width="1.2"/>
<rect x="850" y="171" width="6" height="7" fill="#9a9a9a"/><rect x="851" y="172" width="4" height="2" fill="#eee"/>
<text x="848.9" y="186.3" font-size="5.2" fill="#bdbdbd" text-anchor="middle" font-weight="normal">AAHalf</text>
<text x="848.9" y="197.5" font-size="4.3" fill="#e0e0e0" text-anchor="middle" font-weight="bold">Dynamic</text>
<path d="M840,208 L857,208 M841,208 L844.5,200.5 M856,208 L852.5,200.5 M844,200.5 L853,200.5 M848.5,200.5 L848.5,208 M842.5,204 L854.5,204" stroke="#cfcfcf" stroke-width="0.8" fill="none"/>
<rect x="840" y="208.5" width="17" height="1" fill="#bbb"/>
<text x="848.9" y="214" font-size="5.2" fill="#bdbdbd" text-anchor="middle" font-weight="normal">Persp</text>
<rect x="837.8" y="216.4" width="22.2" height="22.9" rx="2" fill="#363636"/>
<rect x="840.5" y="229" width="16.5" height="1.3" fill="#dadada"/><path d="M848.7,229 L848.7,224 M846.5,226 L848.7,223.5 L851,226" stroke="#dadada" stroke-width="1" fill="none"/>
<text x="851" y="220.5" font-size="3.5" fill="#666">▪ ▾ ▪</text>
<text x="848.9" y="235" font-size="5.2" fill="#bdbdbd" text-anchor="middle" font-weight="normal">Floor</text>
<rect x="837.8" y="242.6" width="22.2" height="22.4" rx="2" fill="#363636"/>
<path d="M840.5,253 L857,253 M848.7,249 L848.7,257" stroke="#ddd" stroke-width="0.8"/><path d="M841,251 L845,251 M852.5,251 L856.5,251" stroke="#ddd" stroke-width="1"/><circle cx="843" cy="251" r="1.2" fill="#ddd"/><circle cx="854.5" cy="251" r="1.2" fill="#ddd"/>
<text x="848.9" y="261" font-size="5.2" fill="#bdbdbd" text-anchor="middle" font-weight="normal">L.Sym</text>
<rect x="837.8" y="268.2" width="22.2" height="21.8" rx="2" fill="#363636"/>
<rect x="850.5" y="276.5" width="6" height="5" rx="0.8" fill="#dcdcdc"/><path d="M851.5,276.5 L851.5,274.5 C851.5,272 855.5,272 855.5,274.5 L855.5,276.5" stroke="#dcdcdc" stroke-width="1.1" fill="none"/>
<ellipse cx="846" cy="282" rx="3" ry="2.5" fill="none" stroke="#888" stroke-width="0.8"/><rect x="843" y="282.5" width="7" height="3" fill="#666"/>
<rect x="837.5" y="292.8" width="22.9" height="9.5" rx="2" fill="#f7931e"/>
<text x="851" y="300.3" font-size="6.2" fill="#2a1a05" text-anchor="middle">XYZ</text><circle cx="843.5" cy="296.5" r="2" fill="none" stroke="#2a1a05" stroke-width="0.8"/>
<circle cx="847" cy="309.5" r="2.3" fill="none" stroke="#cfcfcf" stroke-width="0.9"/><text x="848.5" y="312.5" font-size="4.5" fill="#cfcfcf">Y</text>
<circle cx="848.5" cy="321.5" r="2.3" fill="none" stroke="#cfcfcf" stroke-width="0.9"/><text x="849.5" y="324.5" font-size="4.5" fill="#cfcfcf">Z</text>
<rect x="837.8" y="330.5" width="22.2" height="22.0" rx="2" fill="#363636"/>
<circle cx="848.7" cy="339" r="1.8" fill="#eee"/><g fill="#bbb"><circle cx="843" cy="335" r="0.8"/><circle cx="854.5" cy="335" r="0.8"/><circle cx="843" cy="343" r="0.8"/><circle cx="854.5" cy="343" r="0.8"/></g>
<text x="848.9" y="348.5" font-size="5.2" fill="#bdbdbd" text-anchor="middle" font-weight="normal">Frame</text>
<rect x="837.8" y="355.7" width="22.2" height="23.0" rx="2" fill="#363636"/>
<circle cx="852" cy="363.5" r="3.8" fill="#8a8a8a"/><circle cx="852" cy="363.5" r="2" fill="#bbb"/>
<path d="M841.5,368 C841,365 842,363 843,364 L843.5,361 C844,360 845,360.5 845,361.5 L845.3,360.5 C846,359.5 847,360 847,361 L847.5,361 C848,360.5 849,361 849,362 L849,367 C849,369 847,370.5 845,370.5 C843,370.5 842,369.5 841.5,368 Z" fill="#e8e8e8"/>
<text x="848.9" y="375" font-size="5.2" fill="#bdbdbd" text-anchor="middle" font-weight="normal">Move</text>
<rect x="837.8" y="379.8" width="22.2" height="22.0" rx="2" fill="#363636"/>
<circle cx="848" cy="387" r="3.5" fill="#8a8a8a"/><circle cx="851.5" cy="387" r="3.5" fill="#aaa"/><circle cx="845" cy="391" r="3" fill="none" stroke="#ddd" stroke-width="0.9"/><line x1="843" y1="393" x2="840.5" y2="395.5" stroke="#ddd" stroke-width="1"/>
<text x="848.9" y="398" font-size="5.2" fill="#bdbdbd" text-anchor="middle" font-weight="normal">Zoom3D</text>
<rect x="837.8" y="405" width="22.2" height="22.4" rx="2" fill="#363636"/>
<circle cx="847" cy="414" r="3.5" fill="#9a9a9a"/><circle cx="851" cy="415" r="3" fill="#777"/><path d="M843,413 C843,409 849,408 851,411 M855,416 C855,420 849,421 847,418" stroke="#e0e0e0" stroke-width="1" fill="none"/>
<text x="848.9" y="423.5" font-size="5.2" fill="#bdbdbd" text-anchor="middle" font-weight="normal">Rotate</text>
<rect x="837.8" y="429" width="22.2" height="24.0" rx="2" fill="#2e2e2e"/>
<text x="848.9" y="433.8" font-size="4.3" fill="#e8e8e8" text-anchor="middle" font-weight="bold">Line Fill</text>
<rect x="841" y="436" width="15.5" height="9" fill="none" stroke="#d8d8d8" stroke-width="0.8"/><path d="M841,439 L856.5,439 M841,442 L856.5,442 M846,436 L846,445 M851.3,436 L851.3,445" stroke="#d8d8d8" stroke-width="0.7"/>
<text x="848.9" y="450" font-size="5.2" fill="#bdbdbd" text-anchor="middle" font-weight="normal">PolyF</text>
<rect x="837.8" y="455.2" width="22.2" height="22.0" rx="2" fill="#363636"/>
<rect x="848" y="460" width="8" height="8" fill="none" stroke="#aaa" stroke-width="0.8"/><circle cx="846" cy="467" r="3.5" fill="#c8c8c8"/>
<text x="848.9" y="473.5" font-size="5.2" fill="#bdbdbd" text-anchor="middle" font-weight="normal">Transp</text>
<rect x="837.8" y="479.8" width="22.2" height="23.0" rx="2" fill="#7a4e1e"/>
<circle cx="848" cy="489" r="3.5" fill="#5e3c18"/><line x1="844" y1="493" x2="853" y2="485" stroke="#5a3a15" stroke-width="1"/>
<text x="848.9" y="499" font-size="5.2" fill="#5a3a15" text-anchor="middle" font-weight="normal">Ghost</text>
<text x="848.9" y="510" font-size="4.3" fill="#9a9a9a" text-anchor="middle" font-weight="bold">Dynamic</text>
<circle cx="845.5" cy="517" r="3.2" fill="#8a8a8a"/><circle cx="851.5" cy="517" r="3.2" fill="#8a8a8a"/><circle cx="848.5" cy="514" r="3.5" fill="#e8e8e8"/>
<text x="848.9" y="524" font-size="5.2" fill="#bdbdbd" text-anchor="middle" font-weight="normal">Solo</text>
<rect x="837.8" y="530.6" width="22.2" height="21.4" rx="2" fill="#363636"/>
<g fill="#ccc"><circle cx="843" cy="535" r="0.9"/><circle cx="854" cy="535" r="0.9"/><circle cx="843" cy="543" r="0.9"/><circle cx="854" cy="543" r="0.9"/></g>
<text x="848.9" y="548" font-size="5.2" fill="#bdbdbd" text-anchor="middle" font-weight="normal">Xpose</text>
</svg>


<svg class="a" style="left:-2px;top:-2px" width="1000" height="20" viewBox="0 0 1000 20">
<path d="M872.5,3.5 L876.5,2.8 L877.5,4 L875,5.5 Z" fill="#d8d8d8"/>
<line x1="874.5" y1="4.5" x2="880" y2="10.5" stroke="#d8d8d8" stroke-width="1.2"/>
<path d="M985.5,5 A3,3 0 1 0 988,4.2" stroke="#e8e8e8" stroke-width="1.1" fill="none"/>
<path d="M984,3.5 L986.8,3.3 L986,6 Z" fill="#e8e8e8"/>
<circle cx="987.3" cy="7" r="0.8" fill="#e8e8e8"/>
</svg>
</div>
</body></html>
